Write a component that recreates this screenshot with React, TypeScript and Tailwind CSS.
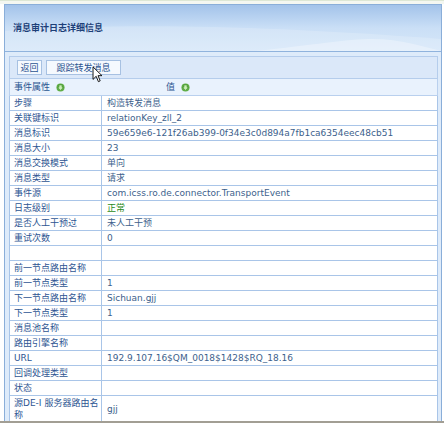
import React from 'react';

type Row = { label: string; value: string; green?: boolean };

const rows: Row[] = [
  { label: '步骤', value: '构造转发消息' },
  { label: '关联键标识', value: 'relationKey_zll_2' },
  { label: '消息标识', value: '59e659e6-121f26ab399-0f34e3c0d894a7fb1ca6354eec48cb51' },
  { label: '消息大小', value: '23' },
  { label: '消息交换模式', value: '单向' },
  { label: '消息类型', value: '请求' },
  { label: '事件源', value: 'com.icss.ro.de.connector.TransportEvent' },
  { label: '日志级别', value: '正常', green: true },
  { label: '是否人工干预过', value: '未人工干预' },
  { label: '重试次数', value: '0' },
  { label: '', value: '' },
  { label: '前一节点路由名称', value: '' },
  { label: '前一节点类型', value: '1' },
  { label: '下一节点路由名称', value: 'Sichuan.gjj' },
  { label: '下一节点类型', value: '1' },
  { label: '消息池名称', value: '' },
  { label: '路由引擎名称', value: '' },
  { label: 'URL', value: '192.9.107.16$QM_0018$1428$RQ_18.16' },
  { label: '回调处理类型', value: '' },
  { label: '状态', value: '' },
];

function SortIcon() {
  return (
    <svg viewBox="0 0 10 10" className="h-[9px] w-[9px]">
      <circle cx="5" cy="5" r="4.5" fill="#5fae45" />
      <path d="M3.3 2.2h3.4v2.6h1.6L5 8.2 1.7 4.8h1.6z" fill="#c9efb6" stroke="#3d8a2a" strokeWidth="0.6" />
    </svg>
  );
}

export default function App() {
  return (
    <div className="relative flex h-[423px] w-[444px] flex-col overflow-hidden bg-white font-['DejaVu_Sans','Noto_Sans_CJK_SC',sans-serif] text-[9px] leading-[12px]">
      <div className="h-[4px] border-t border-[#dde7d5] bg-[#f4f7f1]" />

      <div className="ml-[4px] flex w-[438px] flex-1 flex-col overflow-hidden border-x border-t border-[#8aaed9]">
        {/* header */}
        <div className="relative flex h-[47px] items-center border-b border-[#90b3dd] bg-gradient-to-b from-[#a3c3ea] via-[#cadff6] to-[#d6e7f9] pl-[8px]">
          <svg viewBox="0 0 436 46" preserveAspectRatio="none" className="absolute inset-0 h-full w-full">
            <path d="M0 26 C120 18 250 20 436 34 L436 46 L0 46 Z" fill="#ffffff" opacity="0.18" />
            <path d="M250 46 C310 40 340 34 368 34 C395 34 420 42 436 46 Z" fill="#ffffff" opacity="0.3" />
          </svg>
          <span className="relative text-[9px] font-bold text-[#1d3f78]">消息审计日志详细信息</span>
        </div>

        {/* body */}
        <div className="flex flex-1 flex-col bg-[#deebfa] pl-[4px] pr-[3px] pt-[4px]">
          <div className="flex h-[23px] items-center gap-[4px] border border-[#b5cdec] bg-[#dbe8f9] pl-[7px]">
            <button className="flex h-[15px] w-[25px] items-center justify-center border border-[#a7c1e2] bg-[#f5f9fe] text-[#2b5490]">
              返回
            </button>
            <button className="flex h-[15px] w-[75px] items-center justify-center border border-[#a7c1e2] bg-[#f5f9fe] text-[#2b5490]">
              跟踪转发消息
            </button>
          </div>

          <div className="flex h-[17px] items-center border-x border-b border-[#b9d0ee] bg-[#e9f2fd] text-[#2a5590]">
            <span className="pl-[4px]">事件属性</span>
            <span className="ml-[6px]">
              <SortIcon />
            </span>
            <span className="ml-[101px]">值</span>
            <span className="ml-[6px]">
              <SortIcon />
            </span>
          </div>

          {rows.map((r, i) => (
            <div key={i} className="flex h-[15px] border-x border-b border-[#a9c5e8] bg-white">
              <div className="flex w-[92px] shrink-0 items-center border-r border-[#a9c5e8] pl-[4px] text-[#2d5592]">
                {r.label}
              </div>
              <div
                className={
                  r.green
                    ? 'flex items-center pl-[5px] text-[#1f8a22]'
                    : 'flex items-center pl-[5px] text-[#3d5f8c]'
                }
              >
                {r.value}
              </div>
            </div>
          ))}

          <div className="flex h-[25px] border-x border-[#a9c5e8] bg-white">
            <div className="flex w-[92px] shrink-0 items-center border-r border-[#a9c5e8] pl-[4px] text-[#2d5592]">
              源DE-I 服务器路由名称
            </div>
            <div className="flex items-center pl-[5px] text-[#3d5f8c]">gjj</div>
          </div>
        </div>
      </div>

      <div className="h-[2px] bg-[#a29e94]" />

      {/* mouse pointer over the button */}
      <svg viewBox="0 0 12 19" className="absolute left-[92px] top-[66px] h-[17px] w-[11px]">
        <path d="M1 1 L1 15 L4.5 11.5 L7 17.5 L9 16.6 L6.6 10.8 L11 10.8 Z" fill="#ffffff" stroke="#000000" strokeWidth="1" strokeLinejoin="round" />
      </svg>
    </div>
  );
}
